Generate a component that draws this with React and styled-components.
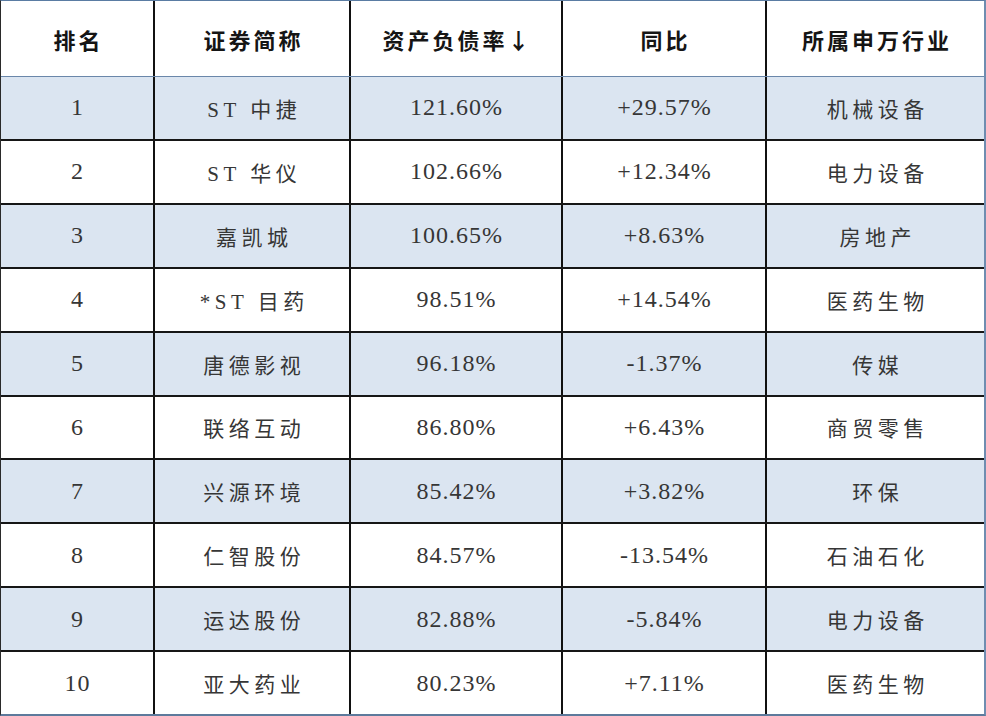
import styled, { createGlobalStyle } from "styled-components";

const rows = [
  ["1", "ST 中捷", "121.60%", "+29.57%", "机械设备"],
  ["2", "ST 华仪", "102.66%", "+12.34%", "电力设备"],
  ["3", "嘉凯城", "100.65%", "+8.63%", "房地产"],
  ["4", "*ST 目药", "98.51%", "+14.54%", "医药生物"],
  ["5", "唐德影视", "96.18%", "-1.37%", "传媒"],
  ["6", "联络互动", "86.80%", "+6.43%", "商贸零售"],
  ["7", "兴源环境", "85.42%", "+3.82%", "环保"],
  ["8", "仁智股份", "84.57%", "-13.54%", "石油石化"],
  ["9", "运达股份", "82.88%", "-5.84%", "电力设备"],
  ["10", "亚大药业", "80.23%", "+7.11%", "医药生物"],
];

const headers = ["排名", "证券简称", "资产负债率↓", "同比", "所属申万行业"];

// columns holding only numbers
const numericCols = [0, 2, 3];

function App() {
  return (
    <>
      <GlobalStyle />
      <Table>
        <HeadRow>
          {headers.map((h) => (
            <HeadCell key={h}>{h}</HeadCell>
          ))}
        </HeadRow>
        {rows.map((r, i) => (
          <Row key={r[0]} $shaded={i % 2 === 0} $last={i === rows.length - 1}>
            {r.map((c, j) => (
              <Cell key={j} $numeric={numericCols.includes(j)}>
                {c}
              </Cell>
            ))}
          </Row>
        ))}
      </Table>
    </>
  );
}

export default App;

const GlobalStyle = createGlobalStyle`
  html, body {
    margin: 0;
    padding: 0;
    background: #ffffff;
  }
  body {
    font-family: "Liberation Serif", "Noto Sans CJK SC", serif;
  }
`;

const Table = styled.div`
  width: 986px;
  height: 716px;
  box-sizing: border-box;
  display: flex;
  flex-direction: column;
  border-top: 1px solid #5a7ca3;
  border-left: 1px solid #2a2a2a;
  border-right: 2px solid #6f8db0;
  border-bottom: 2px solid #5d7a9c;
  overflow: hidden;
`;

const HeadRow = styled.div`
  display: grid;
  grid-template-columns: 154px 196px 212px 204px 1fr;
  height: 75px;
  flex: none;
  border-bottom: 1px solid #6a87aa;
  background: #ffffff;
`;

const Row = styled.div`
  display: grid;
  grid-template-columns: 154px 196px 212px 204px 1fr;
  flex: 1;
  background: ${(p) => (p.$shaded ? "#dbe5f1" : "#ffffff")};
  border-bottom: ${(p) => (p.$last ? "none" : "2px solid #161616")};
`;

const HeadCell = styled.div`
  display: flex;
  align-items: center;
  justify-content: center;
  border-right: 2px solid #111111;
  font-family: "Noto Sans CJK SC", sans-serif;
  font-weight: 700;
  font-size: 22px;
  letter-spacing: 3px;
  padding-left: 3px;
  color: #151515;

  &:last-child {
    border-right: none;
  }
`;

const Cell = styled.div`
  display: flex;
  align-items: center;
  justify-content: center;
  border-right: 2px solid #111111;
  font-family: "Liberation Serif", "Noto Sans CJK SC", serif;
  font-size: ${(p) => (p.$numeric ? "24px" : "21px")};
  letter-spacing: ${(p) => (p.$numeric ? "1px" : "4.5px")};
  padding-left: ${(p) => (p.$numeric ? "1px" : "4.5px")};
  color: #363636;

  &:last-child {
    border-right: none;
  }
`;
